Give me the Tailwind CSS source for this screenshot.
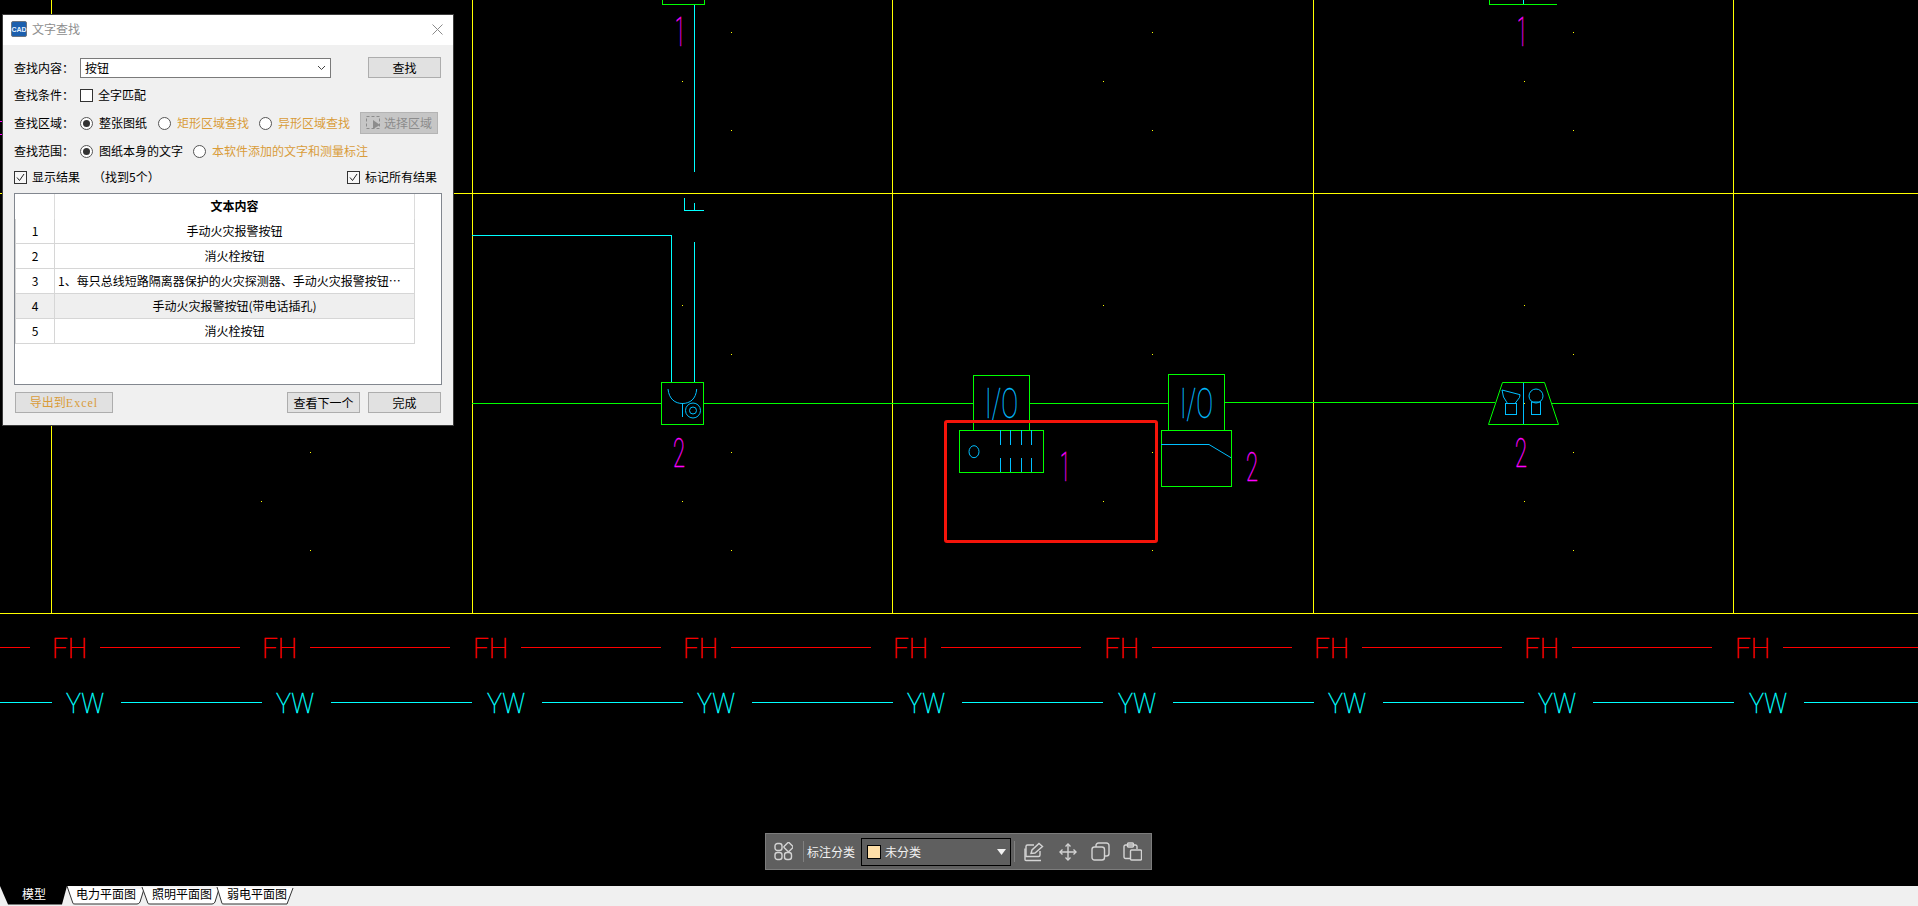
<!DOCTYPE html>
<html lang="zh-CN">
<head>
<meta charset="utf-8">
<title>文字查找</title>
<script src="https://cdn.jsdelivr.net/npm/@tailwindcss/browser@4"></script>
</head>
<body class="m-0 overflow-hidden bg-black font-['Noto_Sans_CJK_SC',sans-serif] text-[12px] leading-none text-black">
<div class="flex h-[906px] w-[1918px] flex-col">
  <main class="relative h-[886px] w-full bg-black">
    <!-- CAD drawing: free canvas -->
    <svg class="absolute inset-0 block" width="1918" height="886" viewBox="0 0 1918 886" fill="none" shape-rendering="crispEdges">
      <!-- axis grid -->
      <g stroke="#ffff00">
        <path d="M0 193.5H1918M0 613.5H1918"/>
        <path d="M51.5 0V613M472.5 0V613M892.5 0V613M1313.5 0V613M1733.5 0V613"/>
      </g>
      <!-- dots -->
      <defs>
        <g id="dots" fill="#ffff00">
          <rect x="682" y="81" width="1" height="1"/><rect x="731" y="32" width="1" height="1"/><rect x="731" y="130" width="1" height="1"/>
          <rect x="682" y="305" width="1" height="1"/><rect x="731" y="354" width="1" height="1"/><rect x="682" y="403" width="1" height="1"/>
          <rect x="731" y="452" width="1" height="1"/><rect x="682" y="501" width="1" height="1"/><rect x="731" y="550" width="1" height="1"/>
        </g>
      </defs>
      <use href="#dots" x="-421"/><use href="#dots"/><use href="#dots" x="421"/><use href="#dots" x="842"/>
      <!-- bleed next to the dialog -->
      <path d="M0 121.5H2M0 134.5H2" stroke="#ff00ff"/>
      <!-- cyan wiring -->
      <g stroke="#00ffff">
        <path d="M472 235.5H671.5V382M694.5 242V382M694.5 4V172"/>
        <path d="M684.5 198V210.5H704M694.5 203V210"/>
        <path d="M1523.5 0V4"/>
      </g>
      <!-- green wiring + boxes -->
      <g stroke="#00ff00">
        <path d="M472 403.5H661M704 403.5H974M1030 403.5H1169M1225 402.5H1495M1552 403.5H1918"/>
        <rect x="661.5" y="382.5" width="42" height="42"/>
        <path d="M662.5 0V4.5H704.5V0"/>
        <path d="M1488.5 4.5H1557M1489 4.5L1490 0"/>
        <rect x="973.5" y="375.5" width="56" height="55"/>
        <rect x="959.5" y="430.5" width="84" height="42"/>
        <rect x="1168.5" y="374.5" width="56" height="56"/>
        <rect x="1161.5" y="430.5" width="70" height="56"/>
      </g>
      <path d="M1502.5 382.5H1544.5L1558.5 424.5H1488.5Z" stroke="#00ff00" shape-rendering="auto"/>
      <!-- symbols -->
      <g stroke="#00bfff" shape-rendering="auto">
        <path d="M668 389C669 399 675 403.500 682.500 403.500C690 403.500 696 399 696.700 389M682.500 403.500V417"/>
        <circle cx="693" cy="410.500" r="7.500"/><circle cx="693" cy="410.500" r="3.500"/>
        <ellipse cx="974" cy="451.700" rx="5" ry="6"/>
        <path d="M1000.500 430V445M1010.500 430V445M1021.500 430V445M1031.500 430V445M1000.500 458V472M1010.500 458V472M1021.500 458V472M1031.500 458V472"/>
        <path d="M1161 444.500H1209L1231 457.700"/>
        <path d="M1523.500 383V424"/>
        <path d="M1502 390L1520 394.700L1519.500 397.500L1515 403.500H1507.500L1503.500 397Z"/>
        <rect x="1505.500" y="403.500" width="11" height="11"/>
        <circle cx="1536" cy="396" r="7"/>
        <rect x="1531.500" y="402" width="9" height="12.500"/>
      </g>
      <g fill="#00bfff" stroke="#00bfff" stroke-width="0.300" font-family="Roboto" font-weight="100" font-size="42">
        <text x="985" y="418" textLength="33" lengthAdjust="spacingAndGlyphs">I/O</text>
        <text x="1180" y="418" textLength="33" lengthAdjust="spacingAndGlyphs">I/O</text>
      </g>
      <!-- magenta numbers -->
      <g fill="#ff00ff" stroke="#ff00ff" stroke-width="0.500" font-family="Roboto" font-weight="100" font-size="40">
        <text x="675" y="46" textLength="10" lengthAdjust="spacingAndGlyphs">1</text>
        <text x="1517" y="46" textLength="10" lengthAdjust="spacingAndGlyphs">1</text>
        <text x="673" y="467" textLength="12" lengthAdjust="spacingAndGlyphs">2</text>
        <text x="1060" y="481" textLength="10" lengthAdjust="spacingAndGlyphs">1</text>
        <text x="1246" y="481" textLength="12" lengthAdjust="spacingAndGlyphs">2</text>
        <text x="1515" y="467" textLength="12" lengthAdjust="spacingAndGlyphs">2</text>
      </g>
      <!-- FH line -->
      <path stroke="#ff0000" d="M0 647.500H30M100 647.500H240M310 647.500H450M521 647.500H661M731 647.500H871M941 647.500H1081M1152 647.500H1292M1362 647.500H1502M1572 647.500H1712M1783 647.500H1918"/>
      <g fill="#ff0000" stroke="#ff0000" stroke-width="0.500" font-family="Roboto" font-weight="100" font-size="28">
        <text x="52" y="658" textLength="35" lengthAdjust="spacingAndGlyphs">FH</text>
        <text x="262" y="658" textLength="35" lengthAdjust="spacingAndGlyphs">FH</text>
        <text x="473" y="658" textLength="35" lengthAdjust="spacingAndGlyphs">FH</text>
        <text x="683" y="658" textLength="35" lengthAdjust="spacingAndGlyphs">FH</text>
        <text x="893" y="658" textLength="35" lengthAdjust="spacingAndGlyphs">FH</text>
        <text x="1104" y="658" textLength="35" lengthAdjust="spacingAndGlyphs">FH</text>
        <text x="1314" y="658" textLength="35" lengthAdjust="spacingAndGlyphs">FH</text>
        <text x="1524" y="658" textLength="35" lengthAdjust="spacingAndGlyphs">FH</text>
        <text x="1735" y="658" textLength="35" lengthAdjust="spacingAndGlyphs">FH</text>
      </g>
      <!-- YW line -->
      <path stroke="#00ffff" d="M0 702.500H52M121 702.500H262M331 702.500H472M542 702.500H683M752 702.500H893M962 702.500H1103M1173 702.500H1314M1383 702.500H1524M1593 702.500H1734M1804 702.500H1918"/>
      <g fill="#00ffff" stroke="#00ffff" stroke-width="0.400" font-family="Roboto" font-weight="100" font-size="28">
        <text x="66" y="713" textLength="38" lengthAdjust="spacingAndGlyphs">YW</text>
        <text x="276" y="713" textLength="38" lengthAdjust="spacingAndGlyphs">YW</text>
        <text x="487" y="713" textLength="38" lengthAdjust="spacingAndGlyphs">YW</text>
        <text x="697" y="713" textLength="38" lengthAdjust="spacingAndGlyphs">YW</text>
        <text x="907" y="713" textLength="38" lengthAdjust="spacingAndGlyphs">YW</text>
        <text x="1118" y="713" textLength="38" lengthAdjust="spacingAndGlyphs">YW</text>
        <text x="1328" y="713" textLength="38" lengthAdjust="spacingAndGlyphs">YW</text>
        <text x="1538" y="713" textLength="38" lengthAdjust="spacingAndGlyphs">YW</text>
        <text x="1749" y="713" textLength="38" lengthAdjust="spacingAndGlyphs">YW</text>
      </g>
    </svg>
    <!-- red highlight -->
    <div class="absolute left-[944px] top-[420px] h-[123px] w-[214px] rounded-[3px] border-[3px] border-[#f5140a]"></div>

    <!-- dialog -->
    <section class="absolute left-[2px] top-[14px] flex h-[412px] w-[452px] flex-col border border-[#3c3c3c] bg-[#f0f0f0]">
      <header class="flex h-[30px] shrink-0 items-center bg-white pb-[2px] pl-[8px] pr-[10px]">
        <svg class="shrink-0" width="16" height="16" viewBox="0 0 16 16"><rect x="0.500" y="0.500" width="15" height="15" rx="1.500" fill="#1b5fae" stroke="#6b7480"/><text x="8" y="11" text-anchor="middle" font-family="Liberation Sans" font-size="7" font-weight="700" fill="#e8f2ff">CAD</text></svg>
        <span class="ml-[5px] text-[#8e8e8e]">文字查找</span>
        <svg class="ml-auto" width="11" height="11" viewBox="0 0 11 11" fill="none" stroke="#8a8a8a"><path d="M0.500 0.500L10.500 10.500M10.500 0.500L0.500 10.500"/></svg>
      </header>
      <div class="flex flex-1 flex-col pl-[11px] pt-[12px]">
        <!-- row 1 -->
        <div class="flex h-[21px] items-center">
          <span class="w-[66px]">查找内容：</span>
          <div class="flex h-[20px] w-[251px] items-center justify-between border border-[#7a7a7a] bg-white pl-[4px] pr-[4px]">
            <span>按钮</span>
            <svg width="9" height="6" viewBox="0 0 9 6" fill="none" stroke="#444"><path d="M1 1L4.500 4.500L8 1"/></svg>
          </div>
          <button class="ml-[37px] h-[21px] w-[73px] border border-[#adadad] bg-[#e1e1e1]">查找</button>
        </div>
        <!-- row 2 -->
        <div class="mt-[6px] flex h-[22px] items-center">
          <span class="w-[66px]">查找条件：</span>
          <span class="h-[13px] w-[13px] border border-[#333] bg-white"></span>
          <span class="ml-[5px]">全字匹配</span>
        </div>
        <!-- row 3 -->
        <div class="mt-[6px] flex h-[22px] items-center">
          <span class="w-[66px]">查找区域：</span>
          <span class="flex h-[13px] w-[13px] items-center justify-center rounded-full border border-[#555] bg-white"><span class="h-[7px] w-[7px] rounded-full bg-[#333]"></span></span>
          <span class="ml-[6px] w-[48px]">整张图纸</span>
          <span class="ml-[11px] h-[13px] w-[13px] rounded-full border border-[#555] bg-white"></span>
          <span class="ml-[6px] w-[72px] text-[#d99c3a]">矩形区域查找</span>
          <span class="ml-[10px] h-[13px] w-[13px] rounded-full border border-[#555] bg-white"></span>
          <span class="ml-[6px] w-[72px] text-[#d99c3a]">异形区域查找</span>
          <button class="ml-[10px] flex h-[22px] w-[78px] items-center justify-center gap-[3px] border border-[#b4b4b4] bg-[#c6c6c6] text-[#8c8c8c]">
            <svg width="15" height="14" viewBox="0 0 15 14" fill="none"><rect x="0.500" y="0.500" width="13" height="12" stroke="#8c8c8c" stroke-dasharray="3 2"/><path d="M7 4L14 9L7 13Z" fill="#8c8c8c"/></svg>
            <span>选择区域</span>
          </button>
        </div>
        <!-- row 4 -->
        <div class="mt-[6px] flex h-[22px] items-center">
          <span class="w-[66px]">查找范围：</span>
          <span class="flex h-[13px] w-[13px] items-center justify-center rounded-full border border-[#555] bg-white"><span class="h-[7px] w-[7px] rounded-full bg-[#333]"></span></span>
          <span class="ml-[6px] w-[84px]">图纸本身的文字</span>
          <span class="ml-[10px] h-[13px] w-[13px] rounded-full border border-[#555] bg-white"></span>
          <span class="ml-[6px] text-[#d99c3a]">本软件添加的文字和测量标注</span>
        </div>
        <!-- row 5 -->
        <div class="mt-[4px] flex h-[22px] items-center">
          <span class="flex h-[13px] w-[13px] items-center justify-center border border-[#333] bg-[#f7f7f7]"><svg width="11" height="11" viewBox="0 0 11 11" fill="none" stroke="#222"><path d="M2 5.500L4.500 8.500L9 2"/></svg></span>
          <span class="ml-[5px] w-[48px]">显示结果</span>
          <span class="ml-[13px] w-[254px]">（找到5个）</span>
          <span class="flex h-[13px] w-[13px] items-center justify-center border border-[#333] bg-[#f7f7f7]"><svg width="11" height="11" viewBox="0 0 11 11" fill="none" stroke="#222"><path d="M2 5.500L4.500 8.500L9 2"/></svg></span>
          <span class="ml-[5px]">标记所有结果</span>
        </div>
        <!-- table -->
        <div class="mt-[5px] h-[192px] w-[428px] border border-[#82878f] bg-white">
          <div class="flex h-[25px] w-[400px] items-center">
            <div class="h-full w-[40px] border-r border-[#dcdcdc]"></div>
            <div class="flex h-full w-[360px] items-center justify-center border-r border-[#dcdcdc] pb-[2px] font-bold">文本内容</div>
          </div>
          <div class="flex h-[25px] w-[400px] border-b border-l border-[#d6d6d6]">
            <div class="flex w-[39px] items-center justify-center border-r border-[#d6d6d6]">1</div>
            <div class="flex w-[360px] items-center justify-center border-r border-[#d6d6d6]">手动火灾报警按钮</div>
          </div>
          <div class="flex h-[25px] w-[400px] border-b border-l border-[#d6d6d6]">
            <div class="flex w-[39px] items-center justify-center border-r border-[#d6d6d6]">2</div>
            <div class="flex w-[360px] items-center justify-center border-r border-[#d6d6d6]">消火栓按钮</div>
          </div>
          <div class="flex h-[25px] w-[400px] border-b border-l border-[#d6d6d6]">
            <div class="flex w-[39px] items-center justify-center border-r border-[#d6d6d6]">3</div>
            <div class="flex w-[360px] items-center overflow-hidden whitespace-nowrap border-r border-[#d6d6d6] pl-[3px]">1、每只总线短路隔离器保护的火灾探测器、手动火灾报警按钮…</div>
          </div>
          <div class="flex h-[25px] w-[400px] border-b border-l border-[#d6d6d6] bg-[#efefef]">
            <div class="flex w-[39px] items-center justify-center border-r border-[#d6d6d6]">4</div>
            <div class="flex w-[360px] items-center justify-center border-r border-[#d6d6d6]">手动火灾报警按钮(带电话插孔)</div>
          </div>
          <div class="flex h-[25px] w-[400px] border-b border-l border-[#d6d6d6]">
            <div class="flex w-[39px] items-center justify-center border-r border-[#d6d6d6]">5</div>
            <div class="flex w-[360px] items-center justify-center border-r border-[#d6d6d6]">消火栓按钮</div>
          </div>
        </div>
        <!-- bottom buttons -->
        <div class="mt-[7px] flex h-[21px] items-center">
          <button class="ml-[1px] h-[21px] w-[98px] border border-[#adadad] bg-[#e1e1e1] text-[#d99c3a]">导出到<span class="font-['Liberation_Serif',serif] tracking-[1px]">Excel</span></button>
          <button class="ml-[174px] h-[21px] w-[73px] border border-[#adadad] bg-[#e1e1e1]">查看下一个</button>
          <button class="ml-[8px] h-[21px] w-[73px] border border-[#adadad] bg-[#e1e1e1]">完成</button>
        </div>
      </div>
    </section>

    <!-- floating toolbar -->
    <div class="absolute left-[765px] top-[833px] flex h-[37px] w-[387px] items-center border border-[#7c7c7c] bg-[#5f5f5f] text-white">
      <svg class="ml-[8px] shrink-0" width="19" height="19" viewBox="0 0 19 19" fill="none" stroke="#d4d4d4" stroke-width="1.400"><rect x="1" y="1.500" width="7" height="7" rx="2.500"/><rect x="11" y="1.500" width="7" height="7" rx="1" transform="rotate(45 14.500 5)"/><rect x="1" y="10.500" width="7" height="7" rx="2.500"/><rect x="10.500" y="10.500" width="7" height="7" rx="2.500"/></svg>
      <span class="ml-[10px] h-[21px] w-px bg-[#808080]"></span>
      <span class="ml-[3px] text-[#f2f2f2]">标注分类</span>
      <div class="ml-[6px] flex h-[28px] w-[150px] items-center border border-black pl-[5px] pr-[4px]">
        <span class="h-[14px] w-[14px] border border-black bg-[#ffdfa8]"></span>
        <span class="ml-[4px] text-[#f2f2f2]">未分类</span>
        <svg class="ml-auto" width="9" height="6" viewBox="0 0 9 6"><path d="M0 0H9L4.500 6Z" fill="#f2f2f2"/></svg>
      </div>
      <span class="ml-[3px] h-[21px] w-px bg-[#808080]"></span>
      <svg class="ml-[9px] shrink-0" width="20" height="20" viewBox="0 0 20 20" fill="none" stroke="#d4d4d4" stroke-width="1.400"><path d="M10 3H3.500A1.500 1.500 0 0 0 2 4.500V14.500H14.500A1.500 1.500 0 0 0 16 13V9"/><path d="M1 6.500V17.500A1 1 0 0 0 2 18.500H17"/><path d="M7 11.500L8 8L15 1.500L18.500 4.500L11 11Z"/></svg>
      <svg class="ml-[14px] shrink-0" width="20" height="20" viewBox="0 0 20 20" fill="none" stroke="#d4d4d4" stroke-width="1.400"><path d="M10 2V18M2 10H18"/><path d="M7.500 4.500L10 2L12.500 4.500M7.500 15.500L10 18L12.500 15.500M4.500 7.500L2 10L4.500 12.500M15.500 7.500L18 10L15.500 12.500"/></svg>
      <svg class="ml-[13px] shrink-0" width="19" height="19" viewBox="0 0 19 19" fill="none" stroke="#d4d4d4" stroke-width="1.400"><rect x="1" y="5" width="12.500" height="13" rx="2.500"/><path d="M5 5V3.500A2.500 2.500 0 0 1 7.500 1H15.500A2.500 2.500 0 0 1 18 3.500V11.500A2.500 2.500 0 0 1 15.500 14H13.500"/></svg>
      <svg class="ml-[13px] shrink-0" width="19" height="19" viewBox="0 0 19 19" fill="none" stroke="#d4d4d4" stroke-width="1.400"><path d="M7 16.500H2.500A1.500 1.500 0 0 1 1 15V4.500A1.500 1.500 0 0 1 2.500 3H12.500A1.500 1.500 0 0 1 14 4.500V7"/><rect x="4.500" y="1" width="6" height="4" rx="1"/><rect x="7.500" y="8" width="11" height="10" rx="1"/></svg>
    </div>
  </main>

  <!-- sheet tabs -->
  <nav class="relative flex h-[20px] items-start bg-[#f0f0f0]">
    <svg class="absolute inset-0" width="320" height="20" viewBox="0 0 320 20" fill="none">
      <path d="M0 0H67L62 18.500H8Z" fill="#000"/>
      <path d="M67 0L73 17.500Q73.500 18 75 18H137Q139 18 140 16L144 3" fill="#fff" stroke="#333"/>
      <path d="M142 1L148 17.500Q148.500 18 150 18H212Q214 18 215 16L219 3" fill="#fff" stroke="#333"/>
      <path d="M217 1L222 17.500Q222.500 18 224 18H287L293 2" fill="#fff" stroke="#333"/>
    </svg>
    <span class="relative ml-[22px] pt-[2px] text-white">模型</span>
    <span class="relative ml-[30px] pt-[2px]">电力平面图</span>
    <span class="relative ml-[16px] pt-[2px]">照明平面图</span>
    <span class="relative ml-[15px] pt-[2px]">弱电平面图</span>
  </nav>
</div>
</body>
</html>
